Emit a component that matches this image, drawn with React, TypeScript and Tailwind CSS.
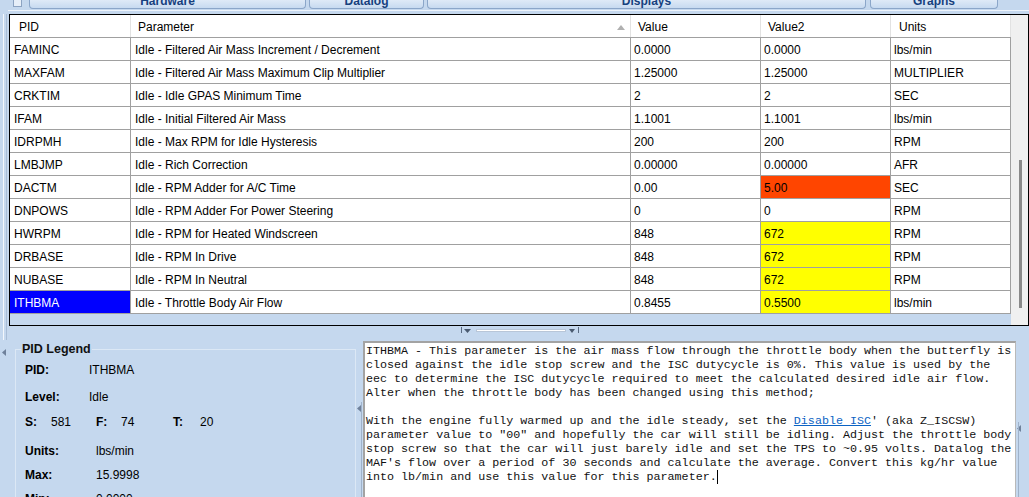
import React from "react";

type Row = { pid: string; param: string; v1: string; v2: string; units: string; hl?: "o" | "y"; sel?: boolean };

const rows: Row[] = [
  { pid: "FAMINC", param: "Idle - Filtered Air Mass Increment / Decrement", v1: "0.0000", v2: "0.0000", units: "lbs/min" },
  { pid: "MAXFAM", param: "Idle - Filtered Air Mass Maximum Clip Multiplier", v1: "1.25000", v2: "1.25000", units: "MULTIPLIER" },
  { pid: "CRKTIM", param: "Idle - Idle GPAS Minimum Time", v1: "2", v2: "2", units: "SEC" },
  { pid: "IFAM", param: "Idle - Initial Filtered Air Mass", v1: "1.1001", v2: "1.1001", units: "lbs/min" },
  { pid: "IDRPMH", param: "Idle - Max RPM for Idle Hysteresis", v1: "200", v2: "200", units: "RPM" },
  { pid: "LMBJMP", param: "Idle - Rich Correction", v1: "0.00000", v2: "0.00000", units: "AFR" },
  { pid: "DACTM", param: "Idle - RPM Adder for A/C Time", v1: "0.00", v2: "5.00", units: "SEC", hl: "o" },
  { pid: "DNPOWS", param: "Idle - RPM Adder For Power Steering", v1: "0", v2: "0", units: "RPM" },
  { pid: "HWRPM", param: "Idle - RPM for Heated Windscreen", v1: "848", v2: "672", units: "RPM", hl: "y" },
  { pid: "DRBASE", param: "Idle - RPM In Drive", v1: "848", v2: "672", units: "RPM", hl: "y" },
  { pid: "NUBASE", param: "Idle - RPM In Neutral", v1: "848", v2: "672", units: "RPM", hl: "y" },
  { pid: "ITHBMA", param: "Idle - Throttle Body Air Flow", v1: "0.8455", v2: "0.5500", units: "lbs/min", hl: "y", sel: true },
];

function Tab({ cls, label }: { cls: string; label: string }) {
  return (
    <div
      className={`${cls} h-[9px] overflow-hidden border border-t-0 border-[#8ba6c9] rounded-b-[4px] bg-linear-to-b from-[#dfeaf7] to-[#c7daf0] text-center`}
    >
      <div className="mt-[-5px] leading-[12px] font-bold text-[#17417e]">{label}</div>
    </div>
  );
}

function LeftArrow() {
  return (
    <svg width="4" height="7" viewBox="0 0 4 7">
      <path d="M4 0 L0 3.5 L4 7 Z" fill="#6f819b" />
    </svg>
  );
}

export default function App() {
  return (
    <div className="w-[1029px] h-[497px] overflow-hidden bg-[#c5d8ee] font-['Liberation_Sans',Arial,sans-serif] text-[12px] text-black flex flex-col">
      {/* tabs */}
      <div className="h-[10px] flex items-start shrink-0">
        <div className="ml-[13px] w-[9px] h-[7px] border border-t-0 border-[#8ca3c2] bg-[#e6eef8]" />
        <Tab cls="ml-[7px] w-[277px]" label="Hardware" />
        <Tab cls="ml-[3px] w-[115px]" label="Datalog" />
        <Tab cls="ml-[3px] w-[439px]" label="Displays" />
        <Tab cls="ml-[4px] w-[128px]" label="Graphs" />
      </div>
      <div className="h-[1px] ml-[8px] bg-[#eef4fb] shrink-0" />
      <div className="h-[3px] shrink-0" />

      <div className="flex flex-1 min-h-0">
        {/* left strip */}
        <div className="w-[9px] shrink-0 flex flex-col">
          <div className="flex h-[326px]">
            <div className="ml-[3px] w-[1px] bg-[#f3f7fc]" />
            <div className="ml-[2px] w-[1px] bg-[#a9bdd6]" />
          </div>
          <div className="ml-[2px] mt-[9px]">
            <LeftArrow />
          </div>
        </div>

        {/* content */}
        <div className="w-[1020px] shrink-0 flex flex-col">
          {/* grid */}
          <div className="h-[312px] border border-black flex shrink-0">
            <div className="w-[1001px] flex flex-col">
              <div className="flex h-[23px] bg-white border-b border-[#a0a0a0]">
                <div className="w-[121px] border-r border-[#e2e2e2] pl-[9px] pt-[2px] flex items-center">PID</div>
                <div className="w-[500px] border-r border-[#e2e2e2] pl-[7px] pr-[5px] pt-[2px] flex items-center justify-between">
                  <span>Parameter</span>
                  <svg width="8" height="5" viewBox="0 0 8 5">
                    <path d="M0 5 L4 0 L8 5 Z" fill="#b0b0b0" />
                  </svg>
                </div>
                <div className="w-[130px] border-r border-[#e2e2e2] pl-[7px] pt-[2px] flex items-center">Value</div>
                <div className="w-[130px] border-r border-[#e2e2e2] pl-[7px] pt-[2px] flex items-center">Value2</div>
                <div className="w-[120px] border-r border-[#e2e2e2] pl-[8px] pt-[2px] flex items-center">Units</div>
              </div>
              {rows.map((r) => (
                <div key={r.pid} className="flex h-[23px] bg-white border-b border-[#a0a0a0]">
                  <div
                    className={
                      r.sel
                        ? "w-[121px] border-r border-[#a0a0a0] pl-[4px] pt-[2px] flex items-center bg-[#0000ff] text-white"
                        : "w-[121px] border-r border-[#a0a0a0] pl-[4px] pt-[2px] flex items-center"
                    }
                  >
                    {r.pid}
                  </div>
                  <div className="w-[500px] border-r border-[#a0a0a0] pl-[4px] pt-[2px] flex items-center">{r.param}</div>
                  <div className="w-[130px] border-r border-[#a0a0a0] pl-[3px] pt-[2px] flex items-center">{r.v1}</div>
                  <div
                    className={
                      r.hl === "o"
                        ? "w-[130px] border-r border-[#a0a0a0] pl-[3px] pt-[2px] flex items-center bg-[#ff4500]"
                        : r.hl === "y"
                        ? "w-[130px] border-r border-[#a0a0a0] pl-[3px] pt-[2px] flex items-center bg-[#ffff00]"
                        : "w-[130px] border-r border-[#a0a0a0] pl-[3px] pt-[2px] flex items-center"
                    }
                  >
                    {r.v2}
                  </div>
                  <div className="w-[120px] border-r border-[#a0a0a0] pl-[3px] pt-[2px] flex items-center">{r.units}</div>
                </div>
              ))}
            </div>
            <div className="w-[17px] bg-[#f0f0f0] pt-[145px]">
              <div className="ml-[8px] w-[3px] h-[148px] bg-[#8a8a8a]" />
            </div>
          </div>

          {/* splitter */}
          <div className="h-[15px] shrink-0 flex items-start pt-[1px]">
            <div className="ml-[452px] w-[1px] h-[6px] bg-[#5a6b82]" />
            <svg className="ml-[2px] mt-[2px]" width="7" height="4" viewBox="0 0 7 4">
              <path d="M0 0 L7 0 L3.5 4 Z" fill="#4a5a70" />
            </svg>
            <div className="ml-[5px] mt-[2px] w-[90px] h-[3px] bg-white border border-[#b8c6d8]" />
            <svg className="ml-[3px] mt-[2px]" width="6" height="4" viewBox="0 0 6 4">
              <path d="M0 0 L6 0 L3 4 Z" fill="#4a5a70" />
            </svg>
            <div className="ml-[3px] w-[1px] h-[6px] bg-[#5a6b82]" />
          </div>

          {/* bottom panels */}
          <div className="flex flex-1 min-h-0">
            {/* group box */}
            <div className="ml-[6px] w-[341px] mt-[8px] relative border border-b-0 border-[#dce8f5] flex flex-col pl-[9px] pt-[12px]">
              <div className="absolute left-[5px] top-[-9px] px-[1px] bg-[#c5d8ee] font-bold text-[12.5px] leading-[16px] text-[#111]">
                PID Legend
              </div>
              <div className="flex h-[16px] items-center">
                <div className="w-[64px] font-bold">PID:</div>
                <div>ITHBMA</div>
              </div>
              <div className="flex h-[16px] items-center mt-[11px]">
                <div className="w-[64px] font-bold">Level:</div>
                <div>Idle</div>
              </div>
              <div className="flex h-[16px] items-center mt-[9px]">
                <div className="w-[26px] font-bold">S:</div>
                <div className="w-[45px]">581</div>
                <div className="w-[25px] font-bold">F:</div>
                <div className="w-[52px]">74</div>
                <div className="w-[27px] font-bold">T:</div>
                <div>20</div>
              </div>
              <div className="flex h-[16px] items-center mt-[13px]">
                <div className="w-[71px] font-bold">Units:</div>
                <div>lbs/min</div>
              </div>
              <div className="flex h-[16px] items-center mt-[8px]">
                <div className="w-[71px] font-bold">Max:</div>
                <div>15.9998</div>
              </div>
              <div className="flex h-[16px] items-center mt-[8px]">
                <div className="w-[71px] font-bold">Min:</div>
                <div>0.0000</div>
              </div>
            </div>

            {/* splitter between */}
            <div className="w-[7px] shrink-0 flex flex-col pt-[64px]">
              <div className="flex">
                <div className="ml-[1px]">
                  <LeftArrow />
                </div>
              </div>
              <div className="ml-[5px] mt-[-10px] w-[1px] flex-1 bg-[#9fb2ca]" />
            </div>

            {/* textarea */}
            <div className="w-[653px] shrink-0 bg-white border-l-2 border-t-2 border-r border-l-[#a3a3a3] border-t-[#a3a3a3] border-r-[#b9b9b9] pt-[1px] pl-[1px] font-['Liberation_Mono','Courier_New',monospace] text-[11.7px] leading-[14px] whitespace-pre text-[#111]">
              <div>ITHBMA - This parameter is the air mass flow through the throttle body when the butterfly is</div>
              <div>closed against the idle stop screw and the ISC dutycycle is 0%. This value is used by the</div>
              <div>eec to determine the ISC dutycycle required to meet the calculated desired idle air flow.</div>
              <div>Alter when the throttle body has been changed using this method;</div>
              <div className="h-[14px]" />
              <div>
                With the engine fully warmed up and the idle steady, set the{" "}
                <span className="text-[#0b63c4] underline">Disable ISC</span>' (aka Z_ISCSW)
              </div>
              <div>parameter value to "00" and hopefully the car will still be idling. Adjust the throttle body</div>
              <div>stop screw so that the car will just barely idle and set the TPS to ~0.95 volts. Datalog the</div>
              <div>MAF's flow over a period of 30 seconds and calculate the average. Convert this kg/hr value</div>
              <div className="flex items-center">
                <span>into lb/min and use this value for this parameter.</span>
                <span className="inline-block w-[1px] h-[14px] bg-black" />
              </div>
            </div>

            {/* right splitter */}
            <div className="flex-1 flex flex-col pt-[84px]">
              <div className="ml-[1px]">
                <LeftArrow />
              </div>
              <div className="ml-[2px] mt-[-10px] w-[1px] flex-1 bg-[#9fb2ca]" />
            </div>
          </div>
        </div>
      </div>
    </div>
  );
}
